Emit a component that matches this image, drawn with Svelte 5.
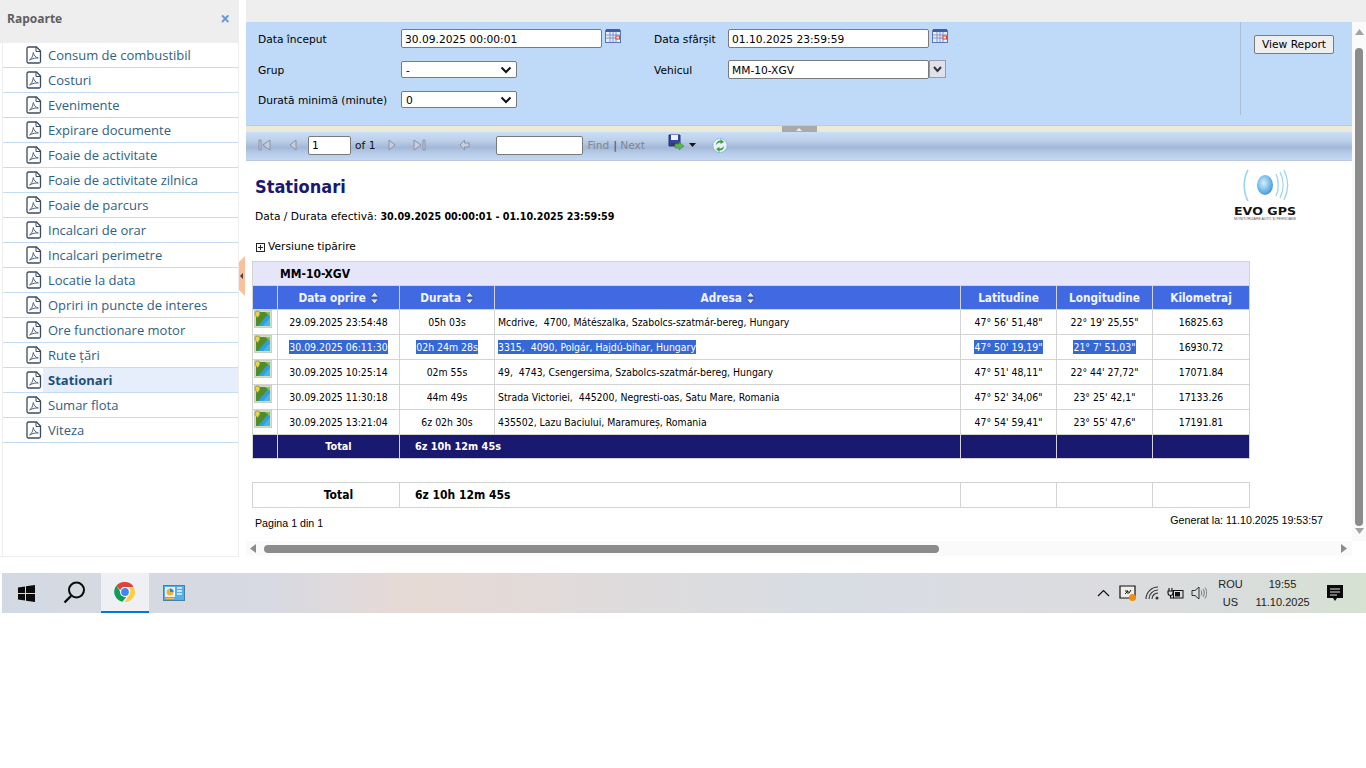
<script>
  const reports = [
    'Consum de combustibil', 'Costuri', 'Evenimente', 'Expirare documente', 'Foaie de activitate',
    'Foaie de activitate zilnica', 'Foaie de parcurs', 'Incalcari de orar', 'Incalcari perimetre',
    'Locatie la data', 'Opriri in puncte de interes', 'Ore functionare motor', 'Rute țări',
    'Stationari', 'Sumar flota', 'Viteza'
  ];

  const rows = [
    { date: '29.09.2025 23:54:48', dur: '05h 03s', addr: 'Mcdrive,  4700, Mátészalka, Szabolcs-szatmár-bereg, Hungary', lat: '47° 56\' 51,48"', lng: '22° 19\' 25,55"', km: '16825.63' },
    { date: '30.09.2025 06:11:30', dur: '02h 24m 28s', addr: '3315,  4090, Polgár, Hajdú-bihar, Hungary', lat: '47° 50\' 19,19"', lng: '21° 7\' 51,03"', km: '16930.72', picked: true },
    { date: '30.09.2025 10:25:14', dur: '02m 55s', addr: '49,  4743, Csengersima, Szabolcs-szatmár-bereg, Hungary', lat: '47° 51\' 48,11"', lng: '22° 44\' 27,72"', km: '17071.84' },
    { date: '30.09.2025 11:30:18', dur: '44m 49s', addr: 'Strada Victoriei,  445200, Negresti-oas, Satu Mare, Romania', lat: '47° 52\' 34,06"', lng: '23° 25\' 42,1"', km: '17133.26' },
    { date: '30.09.2025 13:21:04', dur: '6z 02h 30s', addr: '435502, Lazu Baciului, Maramureș, Romania', lat: '47° 54\' 59,41"', lng: '23° 55\' 47,6"', km: '17191.81' }
  ];
</script>

{#snippet sort()}
  <svg class="sort" width="9" height="14" viewBox="0 0 9 14"><path d="M4.500 1 8.500 6H.5z" fill="#dfe6fa" stroke="#24408f" stroke-width=".7"/><path d="M4.500 13 8.500 8H.5z" fill="#dfe6fa" stroke="#24408f" stroke-width=".7"/></svg>
{/snippet}

{#snippet calendar()}
  <svg class="cal" width="17" height="16" viewBox="0 0 17 16">
    <rect x=".5" y="2.500" width="15" height="12" fill="#e8eefc" stroke="#5a76b8"/>
    <rect x="1" y="1" width="14" height="3" fill="#3f5fa8"/>
    <path d="M1 7h14M1 10h14M5 4v10M8 4v10M11 4v10" stroke="#7d95cf" stroke-width="1"/>
    <rect x="11" y="8" width="3.500" height="3" fill="#fff" stroke="#d9402a"/>
  </svg>
{/snippet}

<div class="window">
  <aside class="side">
    <header class="side-head"><b>Rapoarte</b><span class="close">×</span></header>
    <ul>
      {#each reports as r}
        <li class:on={r === 'Stationari'}>
          <svg class="pdf" width="16" height="18" viewBox="0 0 16 18" fill="none">
            <path d="M2.500 1h8l4 4v10.500a1.500 1.500 0 0 1-1.500 1.500H2.500a1.500 1.500 0 0 1-1.500-1.500V2.500A1.500 1.500 0 0 1 2.500 1Z" stroke="#3b4c60" stroke-width="1.300"/>
            <path d="M10 1v4.500h4.500" stroke="#3b4c60"/>
            <path d="M3.500 14c2-1 3.500-4 3.800-7.500.8 3 2 4.800 5 5.500-2.500-.2-5.500.3-8.800 2Z" stroke="#55657a" stroke-width="1"/>
          </svg>
          <span>{r}</span>
        </li>
      {/each}
    </ul>
  </aside>

  <main class="content">
    <div class="top-gap"></div>

    <section class="filters">
      <div class="fcol one">
        <label for="a">Data început</label>
        <div class="fld"><input id="a" class="txt" value="30.09.2025 00:00:01" />{@render calendar()}</div>
        <label for="b">Grup</label>
        <div class="fld"><div id="b" class="pick">-<svg width="12" height="8" viewBox="0 0 12 8"><path d="M1.500 1.500 6 6l4.500-4.500" fill="none" stroke="#111" stroke-width="2"/></svg></div></div>
        <label for="c">Durată minimă (minute)</label>
        <div class="fld"><div id="c" class="pick">0<svg width="12" height="8" viewBox="0 0 12 8"><path d="M1.500 1.500 6 6l4.500-4.500" fill="none" stroke="#111" stroke-width="2"/></svg></div></div>
      </div>
      <div class="fcol two">
        <label for="d">Data sfârșit</label>
        <div class="fld"><input id="d" class="txt" value="01.10.2025 23:59:59" />{@render calendar()}</div>
        <label for="e">Vehicul</label>
        <div class="fld"><input id="e" class="txt" value="MM-10-XGV" /><span class="dd"><svg width="9" height="7" viewBox="0 0 9 7"><path d="M1 1l3.500 4L8 1" fill="none" stroke="#333" stroke-width="2"/></svg></span></div>
      </div>
      <div class="fbtn"><button>View Report</button></div>
    </section>

    <div class="split"><span class="grip"><i></i></span></div>

    <nav class="tools">
      <svg class="t first" width="13" height="12" viewBox="0 0 13 12"><path d="M1 1h2v10H1zM12 1v10L5 6z" fill="#c6cedd" stroke="#8a93a5"/></svg>
      <svg class="t prev" width="8" height="12" viewBox="0 0 8 12"><path d="M7 1v10L1 6z" fill="#c6cedd" stroke="#8a93a5"/></svg>
      <input class="page" value="1" />
      <span class="of">of 1</span>
      <svg class="t next" width="8" height="12" viewBox="0 0 8 12"><path d="M1 1v10l6-5z" fill="#c6cedd" stroke="#8a93a5"/></svg>
      <svg class="t last" width="13" height="12" viewBox="0 0 13 12"><path d="M12 1h-2v10h2zM1 1v10l7-5z" fill="#c6cedd" stroke="#8a93a5"/></svg>
      <svg class="t back" width="11" height="12" viewBox="0 0 11 12"><path d="M5.500 1v3H10v4H5.500v3L1 6z" fill="#c6cedd" stroke="#8a93a5"/></svg>
      <input class="find" />
      <span class="lnk">Find</span><span class="bar">|</span><span class="lnk">Next</span>
      <svg class="t save" width="17" height="17" viewBox="0 0 17 17">
        <path d="M1 1h11v11H1z" fill="#34479c" stroke="#24327a"/><path d="M3 1h7v5H3z" fill="#eef0fa"/><path d="M3 9h5v3H3z" fill="#3a3a58"/>
        <path d="M7 10h4V8l5 4-5 4v-2H7z" fill="#5fb34c" stroke="#3b8a33" stroke-width=".6"/>
      </svg>
      <svg class="t caret" width="7" height="4" viewBox="0 0 7 4"><path d="M0 0h7L3.500 4z" fill="#111"/></svg>
      <svg class="t refresh" width="16" height="17" viewBox="0 0 16 17">
        <circle cx="8" cy="8.500" r="7" fill="#e9f1fb" stroke="#8fb0da" stroke-dasharray="2 .7"/>
        <path d="M4 8c0-3 2-4.500 4.500-4.500V2L12 5 8.500 7V5.500C7 5.500 5.500 6 4 8Z" fill="#3aa13a"/>
        <path d="M12 9c0 3-2 4.500-4.500 4.500V15L4 12l3.500-2v1.500c1.500 0 3-.5 4.500-2.500Z" fill="#3aa13a"/>
      </svg>
    </nav>

    <div class="mid">
      <article class="report">
        <div class="rep-head">
          <div>
            <h1>Stationari</h1>
            <p class="period">Data / Durata efectivă: <b>30.09.2025 00:00:01 - 01.10.2025 23:59:59</b></p>
          </div>
          <svg class="logo" width="66" height="54" viewBox="0 0 66 54">
            <defs>
              <radialGradient id="ball" cx=".42" cy=".4" r=".65"><stop offset="0" stop-color="#d6eefb"/><stop offset=".55" stop-color="#7cc0ec"/><stop offset="1" stop-color="#3f92d3"/></radialGradient>
            </defs>
            <ellipse cx="33" cy="17" rx="8" ry="10" fill="url(#ball)"/>
            <path d="M16 2C11 11 11 24 16 33" fill="none" stroke="#9fd3f2" stroke-width="1.600"/>
            <path d="M44 6c3 6 3 16 0 22M48 4c4 8 4 18 0 26M52 2c5 10 5 20 0 30" fill="none" stroke="#9fd3f2" stroke-width="1.300"/>
            <text x="2" y="47" textLength="62" lengthAdjust="spacingAndGlyphs" class="logo-t">EVO GPS</text>
            <text x="2" y="51.500" textLength="62" lengthAdjust="spacingAndGlyphs" class="logo-s">MONITORIZARE AUTO ȘI PERSOANE</text>
          </svg>
        </div>

        <div class="print"><span class="plus"></span>Versiune tipărire</div>

        <table class="grid">
          <colgroup><col class="c1"/><col class="c2"/><col class="c3"/><col class="c4"/><col class="c5"/><col class="c6"/><col class="c7"/></colgroup>
          <tbody>
            <tr class="veh"><td colspan="7"><b>MM-10-XGV</b></td></tr>
            <tr class="hd">
              <th></th>
              <th>Data oprire {@render sort()}</th>
              <th>Durata {@render sort()}</th>
              <th>Adresa {@render sort()}</th>
              <th>Latitudine</th>
              <th>Longitudine</th>
              <th>Kilometraj</th>
            </tr>
            {#each rows as row}
              <tr class="rw" class:picked={row.picked}>
                <td class="ic">
                  <svg width="18" height="18" viewBox="0 0 18 18">
                    <rect x=".5" y=".5" width="17" height="17" fill="#cfe0c4" stroke="#c9d0c0"/>
                    <rect x="2" y="2" width="14" height="14" fill="#2f9fe0"/>
                    <path d="M2 2h14L4 16H2z" fill="#4f8d2c"/>
                    <path d="M9 16l7-8v8z" fill="#49b6e6"/>
                    <path d="M11 2h5v4z" fill="#8fc24a"/>
                    <path d="M3.500 1a2.500 2.500 0 0 1 2.500 2.500C6 5.200 4.500 6.500 3.500 8 2.500 6.500 1 5.200 1 3.500A2.500 2.500 0 0 1 3.500 1Z" fill="#e9d54a" stroke="#7b7b2a" stroke-width=".6"/>
                  </svg>
                </td>
                <td class="mid-c"><span>{row.date}</span></td>
                <td class="mid-c"><span>{row.dur}</span></td>
                <td class="addr"><span>{row.addr}</span></td>
                <td class="mid-c"><span>{row.lat}</span></td>
                <td class="mid-c"><span>{row.lng}</span></td>
                <td class="mid-c km">{row.km}</td>
              </tr>
            {/each}
            <tr class="tot">
              <td></td><td class="mid-c">Total</td><td colspan="2" class="tv">6z 10h 12m 45s</td><td></td><td></td><td></td>
            </tr>
          </tbody>
        </table>

        <table class="grid sum">
          <colgroup><col class="s1"/><col class="c4"/><col class="c4b"/><col class="c5"/><col class="c6"/><col class="c7"/></colgroup>
          <tbody>
            <tr><td class="mid-c lead">Total</td><td colspan="2" class="tv">6z 10h 12m 45s</td><td></td><td></td><td></td></tr>
          </tbody>
        </table>

        <div class="foot"><span class="pg">Pagina 1 din 1</span><span class="gen">Generat la: 11.10.2025 19:53:57</span></div>
      </article>

      <div class="vbar">
        <svg width="9" height="6" viewBox="0 0 9 6"><path d="M4.500 0 9 6H0z" fill="#a3a3a3"/></svg>
        <span class="vthumb"></span>
        <svg width="9" height="6" viewBox="0 0 9 6"><path d="M4.500 6 9 0H0z" fill="#a3a3a3"/></svg>
      </div>
    </div>

    <div class="hbar">
      <svg width="6" height="9" viewBox="0 0 6 9"><path d="M0 4.500 6 0v9z" fill="#8c8c8c"/></svg>
      <span class="htrack"><span class="hthumb"></span></span>
      <svg width="6" height="9" viewBox="0 0 6 9"><path d="M6 4.500 0 0v9z" fill="#8c8c8c"/></svg>
    </div>

    <span class="tab"><i></i></span>
  </main>
</div>

<footer class="taskbar">
  <div class="cell start">
    <svg width="17" height="17" viewBox="0 0 17 17"><path d="M0 2.500 7 1.500v6.500H0zM8 1.300 17 0v8H8zM0 9h7v6.500L0 14.500zM8 9h9v8L8 15.700z" fill="#0b0b0b"/></svg>
  </div>
  <div class="cell search">
    <svg width="24" height="24" viewBox="0 0 24 24" fill="none" stroke="#0b0b0b" stroke-width="2"><circle cx="14.500" cy="9" r="7.500"/><path d="M9 15 2.500 21.500" stroke-width="2.400"/></svg>
  </div>
  <div class="cell chrome">
    <svg width="24" height="24" viewBox="0 0 48 48">
      <path d="M24 4a20 20 0 0 1 17.300 10H24a10 10 0 0 0-9.500 6.800L7 11A20 20 0 0 1 24 4Z" fill="#db4437"/>
      <path d="M7 11l10 17.300a10 10 0 0 0 9.800 5.400L19 43.400A20 20 0 0 1 7 11Z" fill="#0f9d58"/>
      <path d="M41.300 14A20 20 0 0 1 24 44l-.4 0 9-15.600A10 10 0 0 0 30.500 15Z" fill="#ffcd40"/>
      <circle cx="24" cy="24" r="10" fill="#fff"/>
      <circle cx="24" cy="24" r="7.800" fill="#4285f4"/>
    </svg>
  </div>
  <div class="cell app">
    <svg width="22" height="16" viewBox="0 0 22 16">
      <rect x=".5" y=".5" width="21" height="15" fill="#58aee6" stroke="#4a7fa8"/>
      <rect x="2" y="2" width="10" height="10" fill="#e8f5fc"/>
      <circle cx="7" cy="7" r="3.500" fill="#f0b23a"/>
      <path d="M7 7V3.500A3.500 3.500 0 0 1 10.500 7z" fill="#2f85cf"/>
      <path d="M14 3h5M14 6h5M14 9h5" stroke="#e8f5fc" stroke-width="1.400"/>
      <path d="M3 13.500h8" stroke="#f0c24a"/>
    </svg>
  </div>

  <div class="tray">
    <svg class="chev" width="13" height="8" viewBox="0 0 13 8"><path d="M1 7 6.500 1.500 12 7" fill="none" stroke="#111" stroke-width="1.200"/></svg>
    <svg class="sync" width="18" height="17" viewBox="0 0 18 17"><path d="M1 1h15v12H1z" fill="#efeee8" stroke="#111" stroke-width="1.200"/><path d="M6 9 9 6M6 6h3v3M12 5l-2 3" fill="none" stroke="#111"/><circle cx="13.500" cy="12.500" r="3.500" fill="#f28c13"/></svg>
    <svg class="wifi" width="15" height="14" viewBox="0 0 15 14" fill="none" stroke="#333" stroke-width="1.100"><path d="M1 13A12 12 0 0 1 13 1M4 13a9 9 0 0 1 9-9M7 13a6 6 0 0 1 6-6"/><circle cx="12" cy="12" r="1.500" fill="#333" stroke="none"/></svg>
    <svg class="batt" width="17" height="13" viewBox="0 0 17 13"><path d="M2 1v3M5 1v3M1 4h5v2a2.500 2.500 0 0 1-5 0zM3.500 8v3h3" fill="none" stroke="#111" stroke-width="1.100"/><rect x="6.500" y="3.500" width="9.500" height="7.500" fill="none" stroke="#111"/><rect x="8" y="5" width="5" height="4.500" fill="#111"/></svg>
    <svg class="vol" width="16" height="14" viewBox="0 0 16 14" fill="none" stroke="#333"><path d="M1 4.500h3L8 1v12L4 9.500H1z"/><path d="M10 4.500c1 1.500 1 3.500 0 5M12 3c1.700 2.500 1.700 5.500 0 8M14 1.500c2.300 3.500 2.300 7.500 0 11" stroke="#777"/></svg>
    <div class="lang"><span>ROU</span><span>US</span></div>
    <div class="clock"><span>19:55</span><span>11.10.2025</span></div>
    <svg class="msg" width="16" height="17" viewBox="0 0 16 17"><path d="M0 0h16v13H10l-2 3-2-3H0z" fill="#0b0b0b"/><path d="M3 4h10M3 7h10M3 10h7" stroke="#e6e2e0"/></svg>
  </div>
</footer>

<style>
  :global(body) {
    background: #fff;
    font-family: "DejaVu Sans", sans-serif;
    color: #000;
  }

  .window {
    display: flex;
    height: 573px;
    background: #fff;
  }

  /* left list */
  .side {
    box-sizing: border-box;
    width: 239px;
    height: 557px;
    flex: none;
    border-right: 1px solid #eee;
    border-bottom: 1px solid #eee;
    font-family: "Open Sans", sans-serif;
  }
  .side-head {
    height: 43px;
    background: #eee;
    display: flex;
    justify-content: space-between;
    align-items: flex-start;
    padding: 10px 8px 0 7px;
    box-sizing: border-box;
    font-size: 12px;
    color: #5f5f5f;
  }
  .close {
    color: #6f93d6;
    font-weight: 700;
    font-size: 17px;
    line-height: 17px;
  }
  .side ul {
    list-style: none;
    margin: 0 0 0 2px;
    padding: 0;
    border-left: 1px solid #eee;
    height: 513px;
  }
  .side li {
    display: flex;
    align-items: center;
    box-sizing: border-box;
    height: 25px;
    padding-left: 23px;
    border-bottom: 1px solid #c5dcf5;
    color: #2f6183;
    font-size: 13px;
  }
  .side li .pdf { flex: none; margin-right: 6px; }
  .side li span { flex: 1; line-height: 24px; }
  .side li.on span { background: #e5eefa; font-weight: 700; color: #1f5078; padding-left: 5px; margin-left: -5px; }

  /* right part */
  .content {
    position: relative;
    margin-left: 7px;
    width: 1120px;
    height: 557px;
    display: flex;
    flex-direction: column;
  }
  .top-gap { height: 22px; background: #eee; flex: none; }

  .filters {
    flex: none;
    height: 103px;
    width: 1106px;
    background: #bfdaf8;
    display: flex;
    font-size: 10.67px;
    box-sizing: border-box;
    padding-top: 7px;
  }
  .fcol {
    display: grid;
    grid-template-columns: var(--lw) 1fr;
    grid-template-rows: 31px 30px 30px;
    align-items: start;
  }
  .fcol.one { --lw: 143px; width: 396px; margin-left: 12px; }
  .fcol.two { --lw: 74px; width: 586px; }
  .fcol label { line-height: 19px; padding-top: 1px; }
  .fld { display: flex; align-items: flex-start; }
  .txt {
    box-sizing: border-box;
    width: 201px;
    height: 19px;
    padding: 1px 3px 0;
    border: 1px solid #7a7a7a;
    border-radius: 2px;
    font: inherit;
    background: #fff;
    color: #000;
  }
  .cal { margin: -1px 0 0 3px; }
  .pick {
    box-sizing: border-box;
    width: 116px;
    height: 17px;
    margin-top: 1px;
    padding: 1px 4px 0;
    border: 1px solid #7a7a7a;
    border-radius: 2px;
    background: #fff;
    display: flex;
    justify-content: space-between;
    align-items: center;
  }
  .dd {
    width: 17px;
    height: 18px;
    box-sizing: border-box;
    border: 1px solid #9a9aa5;
    background: #dfe2ec;
    display: flex;
    align-items: center;
    justify-content: center;
  }
  .fbtn {
    border-left: 1px solid #a9bdd3;
    height: 93px;
    margin-top: -7px;
    padding: 12px 0 0 13px;
    box-sizing: border-box;
  }
  button {
    width: 80px;
    height: 19px;
    margin-top: 1px;
    padding: 0;
    border: 1px solid #7a7a7a;
    border-radius: 2px;
    background: #efefef;
    font: inherit;
    color: #000;
  }

  .split {
    flex: none;
    box-sizing: border-box;
    width: 1106px;
    height: 7px;
    background: #ece9d8;
    border-top: 1px solid #c9c9c9;
    display: flex;
    justify-content: center;
  }
  .grip {
    width: 35px;
    height: 6px;
    background: #a9a9a9;
    display: flex;
    justify-content: center;
    align-items: center;
  }
  .grip i {
    border-left: 3px solid transparent;
    border-right: 3px solid transparent;
    border-bottom: 3px solid #eee;
  }

  .tools {
    flex: none;
    box-sizing: border-box;
    width: 1106px;
    height: 29px;
    display: flex;
    align-items: center;
    padding: 0 0 2px 12px;
    border-bottom: 1px solid #bcc8d8;
    background: linear-gradient(#c9def7 0, #bcd0ea 30%, #a3b8d8 55%, #b6cbe8 75%, #c2d8f3 100%);
    font-size: 10.67px;
  }
  .t { flex: none; }
  .first { margin-right: 18px; }
  .prev { margin-right: 11px; }
  .page, .find {
    box-sizing: border-box;
    height: 19px;
    border: 1px solid #7a7a7a;
    border-radius: 2px;
    background: #fff;
    font: inherit;
    padding: 0 3px;
  }
  .page { width: 43px; }
  .of { margin: 0 13px 0 4px; color: #111; }
  .next { margin-right: 17px; }
  .last { margin-right: 33px; }
  .back { margin-right: 26px; }
  .find { width: 87px; margin-right: 4px; }
  .lnk { color: #82868e; }
  .bar { color: #46628f; font-weight: 700; margin: 0 3px 0 4px; }
  .save { margin-left: 23px; margin-top: -5px; }
  .caret { margin: 0 16px 0 4px; }

  .mid { display: flex; height: 380px; flex: none; }
  .report {
    box-sizing: border-box;
    width: 1106px;
    padding: 7px 0 0 6px;
    overflow: hidden;
    font-family: "DejaVu Sans Condensed", "DejaVu Sans", sans-serif;
  }
  .rep-head {
    display: flex;
    justify-content: space-between;
    width: 1043px;
    padding-left: 3px;
  }
  h1 {
    margin: 7px 0 0;
    font-size: 18px;
    line-height: 24px;
    color: #191970;
  }
  .period {
    margin: 11px 0 0;
    font: 10.67px/14px "DejaVu Sans", sans-serif;
  }
  .period b {
    font-family: "DejaVu Sans Condensed", "DejaVu Sans", sans-serif;
  }
  .logo { display: block; }
  .logo-t { font: 700 10px "DejaVu Sans", sans-serif; fill: #111; }
  .logo-s { font: 3px "Liberation Sans", sans-serif; fill: #555; }

  .print {
    display: flex;
    align-items: center;
    margin: 16px 0 0 4px;
    font: 10.67px/14px "DejaVu Sans", sans-serif;
  }
  .plus {
    box-sizing: border-box;
    width: 9px;
    height: 9px;
    margin-right: 3px;
    border: 1px solid #222;
    background: linear-gradient(#222, #222) center / 5px 1px no-repeat, linear-gradient(#222, #222) center / 1px 5px no-repeat;
  }

  .grid {
    border-collapse: collapse;
    table-layout: fixed;
    width: 997px;
    margin-top: 7px;
    font-size: 10.4px;
  }
  .grid td, .grid th { border: 1px solid #d3d3d3; padding: 0; }
  .c1 { width: 25px; }
  .c2 { width: 122px; }
  .c3 { width: 95px; }
  .c4 { width: 466px; }
  .c5 { width: 96px; }
  .c6 { width: 96px; }
  .c7 { width: 97px; }
  .s1 { width: 147px; }
  .c4b { width: 95px; }
  .veh td { height: 23px; background: #e6e6fa; padding-left: 27px; font-size: 12px; }
  .hd th {
    height: 23px;
    background: #4169e1;
    color: #f2f5ff;
    font-size: 11.7px;
    font-weight: 700;
  }
  .sort { vertical-align: -3px; }
  .rw td { height: 24px; }
  .ic { text-align: center; vertical-align: top; }
  .ic svg { display: block; margin: 0 0 0 1px; }
  .mid-c { text-align: center; }
  .addr { padding-left: 3px !important; white-space: pre; }
  .rw.picked span { background: #3568d4; color: #fff; padding: 1px 0; }
  .tot td { height: 23px; background: #191970; color: #fff; font-weight: 700; font-size: 10.8px; }
  .tv { padding-left: 15px !important; }
  .sum { margin-top: 23px; }
  .sum td { height: 24px; font-weight: 700; font-size: 12px; }
  .lead { padding-left: 25px !important; }
  .foot {
    display: flex;
    justify-content: space-between;
    width: 1068px;
    padding: 1px 0 0 3px;
    font: 10.67px/14px "Liberation Sans", sans-serif;
  }
  .pg { margin-top: 7px; }
  .gen { margin-top: 4px; }

  .vbar {
    width: 14px;
    flex: none;
    margin-top: -139px;
    height: 519px;
    background: #fafafa;
    display: flex;
    flex-direction: column;
    align-items: center;
    justify-content: space-between;
    padding: 7px 0;
    box-sizing: border-box;
  }
  .vthumb { width: 8px; height: 478px; margin-top: 10px; background: #8c8c8c; border-radius: 4px; }

  .hbar {
    flex: none;
    height: 15px;
    width: 1106px;
    box-sizing: border-box;
    background: #fafafa;
    display: flex;
    align-items: center;
    gap: 8px;
    padding: 0 5px 0 4px;
  }
  .htrack { flex: 1; }
  .hthumb { display: block; width: 675px; height: 8px; background: #8c8c8c; border-radius: 4px; }

  .tab {
    position: absolute;
    left: -7px;
    top: 256px;
    width: 6px;
    height: 40px;
    background: #f9c09c;
    clip-path: polygon(100% 0, 100% 100%, 0 85%, 0 15%);
    display: flex;
    align-items: center;
  }
  .tab i {
    border-top: 3px solid transparent;
    border-bottom: 3px solid transparent;
    border-right: 3px solid #444;
    margin-left: 1px;
  }

  /* windows taskbar */
  .taskbar {
    display: flex;
    height: 40px;
    margin-left: 2px;
    background: linear-gradient(90deg, #d3d9e2 0, #d8d9e2 20%, #e7dad5 30%, #dfdbdc 45%, #d8dde3 60%, #dcdce0 80%, #d9dcdc 90%, #d6e2d2 100%);
    font: 11px "Liberation Sans", sans-serif;
    color: #222;
  }
  .cell {
    display: flex;
    align-items: center;
    justify-content: center;
    height: 40px;
    box-sizing: border-box;
  }
  .start { width: 48px; }
  .search { width: 51px; padding-right: 4px; }
  .chrome { width: 48px; background: #eef0f4; border-bottom: 2px solid #0078d7; }
  .app { width: 50px; }
  .tray {
    margin-left: auto;
    display: flex;
    align-items: center;
    height: 40px;
  }
  .chev { margin-right: 9px; }
  .sync { margin-right: 8px; }
  .wifi { margin-right: 7px; }
  .batt { margin-right: 7px; }
  .vol { margin-right: 9px; }
  .lang, .clock { display: flex; flex-direction: column; align-items: center; gap: 3px; line-height: 15px; }
  .lang { width: 29px; margin-right: 10px; }
  .clock { width: 55px; margin-right: 17px; }
  .msg { margin-right: 23px; }
</style>
